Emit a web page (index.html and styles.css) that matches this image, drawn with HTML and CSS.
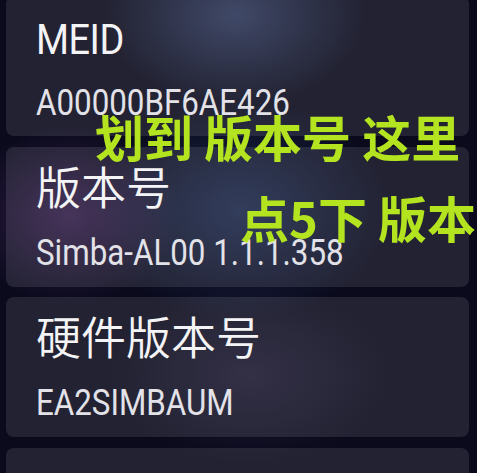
FILE: index.html
```html
<!DOCTYPE html>
<html lang="zh">
<head>
<meta charset="utf-8">
<title>关于手机</title>
<link rel="stylesheet" href="styles.css">
</head>
<body>
<div class="screen">
  <div class="list">
    <div class="card">
      <div class="title"><span class="lat lat-title">MEID</span></div>
      <div class="value"><span class="lat">A00000BF6AE426</span></div>
    </div>
    <div class="card">
      <div class="title">版本号</div>
      <div class="value"><span class="lat">Simba-AL00 1.1.1.358</span></div>
    </div>
    <div class="card">
      <div class="title">硬件版本号</div>
      <div class="value"><span class="lat">EA2SIMBAUM</span></div>
    </div>
    <div class="card"></div>
  </div>
  <div class="note note-1">划到 版本号 这里</div>
  <div class="note note-2">点5下 版本号</div>
</div>
</body>
</html>
```

FILE: styles.css
```css
html, body {
  margin: 0;
  padding: 0;
}

body {
  width: 477px;
  height: 473px;
  overflow: hidden;
  background-color: #0a0a1c;
  background-image:
    radial-gradient(ellipse 130px 90px at 235px 15px, rgba(75, 95, 145, 0.5), transparent),
    radial-gradient(ellipse 110px 90px at 70px 215px, rgba(115, 60, 145, 0.38), transparent),
    radial-gradient(ellipse 150px 110px at 240px 210px, rgba(60, 95, 160, 0.35), transparent),
    radial-gradient(ellipse 140px 90px at 250px 375px, rgba(85, 70, 115, 0.25), transparent);
  font-family: "Roboto", "Noto Sans CJK SC", sans-serif;
}

.screen {
  position: relative;
  height: 473px;
  overflow: hidden;
}

.list {
  display: flex;
  flex-direction: column;
  gap: 10.5px;
  padding: 0 8px 0 6px;
  margin-top: -4px;
}

.card {
  flex: none;
  box-sizing: border-box;
  height: 140px;
  padding: 13px 0 0 30px;
  border-radius: 8px;
  background: rgba(255, 255, 255, 0.1);
}

.title {
  font-family: "Roboto", "Noto Sans CJK SC", sans-serif;
  font-size: 45px;
  font-weight: 350;
  line-height: 60px;
  color: #f4f4f6;
  white-space: nowrap;
}

.value {
  margin-top: 9px;
  font-size: 36px;
  line-height: 48px;
  color: #e2e2e8;
  white-space: nowrap;
}

.lat {
  display: inline-block;
  transform: scaleX(0.87);
  transform-origin: left center;
}

.lat-title {
  font-size: 42px;
  font-weight: 400;
  letter-spacing: -0.5px;
  transform: scaleX(0.9);
}

.note {
  position: absolute;
  font-family: "Noto Sans CJK SC", sans-serif;
  font-weight: 700;
  font-size: 49px;
  line-height: 48px;
  color: #b3e41f;
  white-space: nowrap;
}

.note-1 {
  left: 95px;
  top: 112px;
}

.note-2 {
  left: 240px;
  top: 193px;
}
```
